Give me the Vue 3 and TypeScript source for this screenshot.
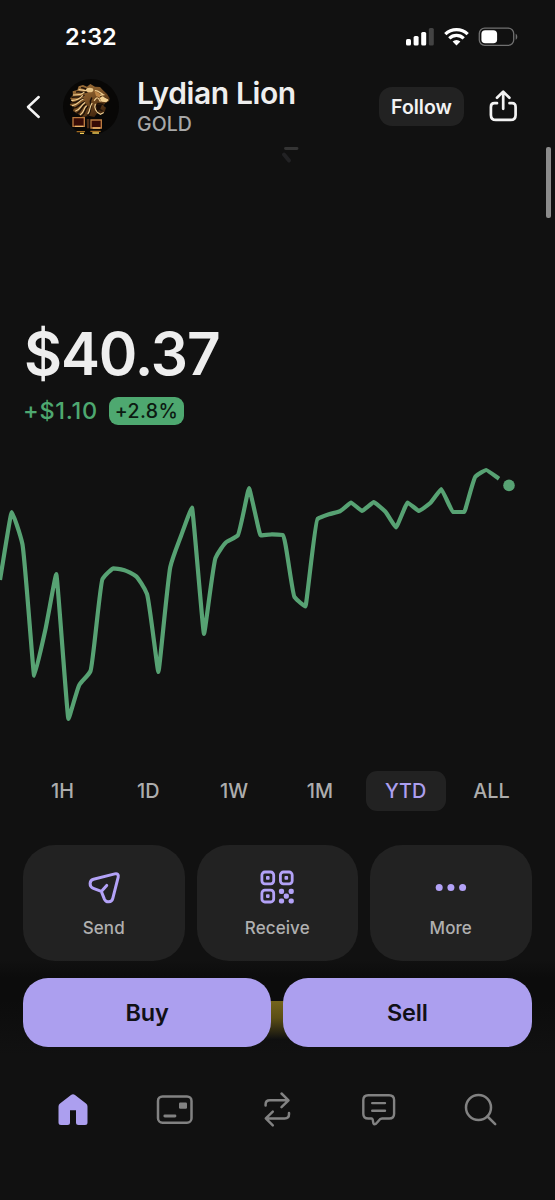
<script setup lang="ts">
type Point = [number, number]

const points: Point[] = [
  [0, 130], [11.7, 62], [22.4, 94], [34.2, 226], [45.3, 180], [56.3, 124], [68.4, 269],
  [79.3, 235], [90.5, 221], [102.5, 129], [113.3, 118.4], [124.5, 120.3], [135.7, 126], [147, 144],
  [158.4, 222], [170.3, 117], [181, 86], [192, 57.5], [204, 184], [215.5, 108], [226.4, 92],
  [237.7, 85.5], [249, 38], [260.5, 85.3], [272, 84.3], [283, 85], [294.5, 147], [305.5, 156.3],
  [317.5, 69], [329, 64.3], [340, 61.2], [351, 52.5], [362, 61], [373.7, 52.2], [385, 61.3],
  [396, 77.5], [407.5, 52.5], [419, 61], [430, 53.3], [441.3, 39], [452.8, 62], [464.3, 62],
  [475.5, 26.5], [486.2, 20], [499, 28.7],
]

function slopeAt(p: Point[], i: number): number {
  if (i === 0 || i === p.length - 1) {
    const a = i === 0 ? 0 : i - 1
    return (p[a + 1][1] - p[a][1]) / (p[a + 1][0] - p[a][0])
  }
  const before = (p[i][1] - p[i - 1][1]) / (p[i][0] - p[i - 1][0])
  const after = (p[i + 1][1] - p[i][1]) / (p[i + 1][0] - p[i][0])
  return before * after <= 0 ? 0 : (2 * before * after) / (before + after)
}

function smoothPath(p: Point[]): string {
  let d = `M${p[0][0]} ${p[0][1]}`
  for (let i = 1; i < p.length; i++) {
    const [x0, y0] = p[i - 1]
    const [x1, y1] = p[i]
    const s0 = slopeAt(p, i - 1)
    const s1 = slopeAt(p, i)
    // Turning points get short handles so the tips stay narrow.
    const h0 = (x1 - x0) * (s0 === 0 ? 0.08 : 0.2)
    const h1 = (x1 - x0) * (s1 === 0 ? 0.08 : 0.2)
    d += `C${x0 + h0} ${y0 + s0 * h0} ${x1 - h1} ${y1 - s1 * h1} ${x1} ${y1}`
  }
  return d
}

const line = smoothPath(points)
const ranges = ['1H', '1D', '1W', '1M', 'YTD', 'ALL']
const selected = 'YTD'
</script>

<template>
  <div class="screen">
    <div class="status">
      <span class="time">2:32</span>
      <svg class="indicators" width="114" height="24" viewBox="0 0 114 24">
        <g fill="#fff">
          <rect x="1" y="14" width="5" height="6.6" rx="1.5" />
          <rect x="8.6" y="11" width="5" height="9.6" rx="1.5" />
          <rect x="16.2" y="7" width="5" height="13.6" rx="1.5" />
          <rect x="23.8" y="3" width="5" height="17.6" rx="1.5" fill="#434343" />
        </g>
        <g fill="none" stroke="#fff" stroke-width="3.2">
          <path d="M40.3 9.2a15.9 15.9 0 0 1 22.4 0" />
          <path d="M44.3 13.4a10.2 10.2 0 0 1 14.4 0" />
        </g>
        <path d="M47.6 16.6a5.8 5.8 0 0 1 7.8 0L51.5 20.5z" fill="#fff" />
        <rect x="74.3" y="3.2" width="34.4" height="17.2" rx="5.4" fill="none" stroke="#707070" stroke-width="1.3" />
        <rect x="76.4" y="5.2" width="15.7" height="13.1" rx="3.8" fill="#fff" />
        <path d="M110.7 8.8c2 .7 2.2 5.3 0 6z" fill="#707070" />
      </svg>
    </div>

    <header class="header">
      <svg class="back" width="20" height="28" viewBox="0 0 20 28">
        <path d="M15.7 4L5 14l10.7 10" fill="none" stroke="#f3f3f3" stroke-width="2.5" stroke-linecap="round" stroke-linejoin="round" />
      </svg>
      <svg class="avatar" width="56" height="56" viewBox="24 25 168 168">
        <defs>
          <linearGradient id="gold" x1="0" y1="0" x2="0.7" y2="1">
            <stop offset="0" stop-color="#a97b42" />
            <stop offset="0.5" stop-color="#7d5326" />
            <stop offset="1" stop-color="#3d220c" />
          </linearGradient>
        </defs>
        <circle cx="108" cy="109" r="84" fill="#080706" />
        <path d="M96 48l10-8 14 8 15 1 9 10 12 11 8 13-2 9-11 5-6 8 8 6-4 12-10 7-12-3-9 12-18-4-16 5-16-11-14-8 4-12-14-6 8-12-7-8 9-9-1-12 14-4 4-11 13-4z" fill="url(#gold)" />
        <g fill="none" stroke="#1e1108" stroke-width="4.5" stroke-linecap="round">
          <path d="M51 80c16-4 26 4 36-6M47 97c18 2 25-8 37-13M54 113c16 0 20-15 34-19M64 129c17-6 12-20 28-28M79 137c16-10 8-20 19-29M65 64c13-3 21 7 34-2M80 51c11 0 16 11 29 4M97 137c10-8 8-20 11-28M110 82c-10 15 3 18-5 32" />
          <path d="M125 72l14 9 10 0M144 101l-15-2-8 12 8 14M133 116l8 4" />
        </g>
        <g fill="none" stroke="#efce92" stroke-width="3.5" stroke-linecap="round">
          <path d="M55 73c13-2 22 2 32-8M50 89c14 1 24-5 33-14M52 105c17-3 18-13 32-19M62 121c16-5 14-16 27-25M76 132c13-8 8-17 18-26M72 57c12 0 18 6 28 0M99 129c8-9 3-20 12-31" />
          <path d="M121 60c10 0 15 8 24 12l-12 2M118 89c6-8 10-13 17 2l22-4M121 101c-5 11 3 24 15 30l9-5" />
        </g>
        <ellipse cx="104" cy="58" rx="11" ry="7" fill="#e9c688" />
        <path d="M133 82l10-5 18 11-7 7-13-2z" fill="#f2d091" />
        <path d="M118 60l15 8 4 14-14-6z" fill="#bd8545" />
        <path d="M124 103l17-1-5 12-9 9z" fill="#170b06" />
        <path d="M54 141h34v26H54zM108 148h31v24h-31z" fill="#370b06" stroke="#b9793f" stroke-width="4" />
        <path d="M95 145h8v28h-7z" fill="#4b2c17" />
        <path d="M60 167h25M113 172h23" stroke="#f0b66b" stroke-width="4" />
        <path d="M65 183h25M106 182h31" stroke="#a56c20" stroke-width="4" />
        <path d="M75 188h12M112 187h20" stroke="#f1cd57" stroke-width="4" />
      </svg>
      <div class="names">
        <h1>Lydian Lion</h1>
        <span class="ticker">GOLD</span>
      </div>
      <button class="follow">Follow</button>
      <svg class="share" width="32" height="36" viewBox="0 0 32 36">
        <g fill="none" stroke="#f3f3f3" stroke-width="2.7" stroke-linecap="round" stroke-linejoin="round">
          <path d="M16.2 19.800V3.200M10 8.800l6.200-6.200 6.200 6.200" />
          <path d="M10 14.200H7.500c-2.500 0-3.600 1.300-3.600 3.700v8c0 3.600 1.700 5 5 5h14.700c3.300 0 5-1.400 5-5v-8c0-2.400-1.100-3.700-3.600-3.700h-2.500" />
        </g>
      </svg>
    </header>

    <main class="content">
      <svg class="loader" width="20" height="18" viewBox="0 0 20 18">
        <path d="M6.500 1.500H18" stroke="#343434" stroke-width="2.800" stroke-linecap="round" />
        <path d="M5 7.500l5 6" stroke="#222224" stroke-width="4" stroke-linecap="round" />
      </svg>
      <div class="scrollbar"></div>

      <div class="price">$40.37</div>
      <div class="change">
        <span class="delta">+$1.10</span>
        <span class="percent">+2.8%</span>
      </div>

      <svg class="chart" width="555" height="290" viewBox="0 0 555 290">
        <path :d="line" fill="none" stroke="#57a273" stroke-width="4.2" stroke-linejoin="round" />
        <circle cx="509" cy="35.4" r="5.8" fill="#57a273" />
      </svg>

      <div class="ranges">
        <button v-for="range in ranges" :key="range" :class="{ active: range === selected }">{{ range }}</button>
      </div>

      <div class="actions">
        <button class="action">
          <svg width="40" height="40" viewBox="0 0 40 40">
            <path d="M9.5 12.300L30.800 6.900c2.600-.7 4 .9 3.400 3.300l-5.400 21.200c-1.100 4.300-6.600 4.600-8.400.7l-3.100-7.700-7.900-3c-4.500-1.800-4.300-7.900.1-9.100zM17.300 24.400l5.400-6" fill="none" stroke="#b3a2f7" stroke-width="3" stroke-linecap="round" stroke-linejoin="round" />
          </svg>
          <span>Send</span>
        </button>
        <button class="action">
          <svg width="40" height="40" viewBox="0 0 40 40">
            <g fill="none" stroke="#b3a2f7" stroke-width="2.8">
              <rect x="4.9" y="5" width="11.8" height="11.8" rx="3" />
              <rect x="23.4" y="5" width="11.8" height="11.8" rx="3" />
              <rect x="4.9" y="23.2" width="11.8" height="11.8" rx="3" />
            </g>
            <g fill="#b3a2f7">
              <rect x="9" y="9.1" width="3.6" height="3.6" rx=".8" />
              <rect x="27.5" y="9.1" width="3.6" height="3.6" rx=".8" />
              <rect x="9" y="27.3" width="3.6" height="3.6" rx=".8" />
              <rect x="21.900" y="21.800" width="5.200" height="5.200" rx="2" />
              <rect x="31.600" y="21.800" width="5.200" height="5.200" rx="2" />
              <rect x="26.700" y="26.600" width="5.200" height="5.200" rx="2" />
              <rect x="21.900" y="31.400" width="5.200" height="5.200" rx="2" />
              <rect x="31.600" y="31.400" width="5.200" height="5.200" rx="2" />
            </g>
          </svg>
          <span>Receive</span>
        </button>
        <button class="action">
          <svg width="40" height="40" viewBox="0 0 40 40">
            <g fill="#b3a2f7">
              <circle cx="8.200" cy="20.500" r="3.500" />
              <circle cx="19.900" cy="20.500" r="3.500" />
              <circle cx="31.600" cy="20.500" r="3.500" />
            </g>
          </svg>
          <span>More</span>
        </button>
      </div>
    </main>

    <footer class="footer">
      <div class="peek"></div>
      <div class="trade">
        <button>Buy</button>
        <button>Sell</button>
      </div>
      <nav class="tabs">
        <svg width="44" height="44" viewBox="0 0 44 44">
          <path d="M20 8q2-1.700 4 0l11 8.600q1.500 1.200 1.500 3v15.900q0 2.500-2.500 2.500h-6.500q-2.500 0-2.500-2.500V23.200h-6v12.300q0 2.500-2.500 2.500H10q-2.500 0-2.500-2.500V19.600q0-1.800 1.500-3z" fill="#ac9fef" />
        </svg>
        <svg width="44" height="44" viewBox="0 0 44 44">
          <rect x="5" y="9.400" width="33.500" height="26.400" rx="4.500" fill="none" stroke="#828282" stroke-width="2.500" />
          <rect x="26" y="15.400" width="8" height="6.400" rx="1.200" fill="#828282" />
          <path d="M11.800 29H22" stroke="#828282" stroke-width="2.800" stroke-linecap="round" />
        </svg>
        <svg width="44" height="44" viewBox="0 0 44 44">
          <g fill="none" stroke="#828282" stroke-width="2.500" stroke-linecap="round" stroke-linejoin="round">
            <path d="M10.600 18.500v-1c0-2.500 1.700-4.200 4.300-4.200H33M26.500 6.500l7 6.800-7 6.900" />
            <path d="M34 26v1.200c0 2.500-1.700 4.200-4.300 4.200H11.300M17.800 24.700l-7 6.700 7 7" />
          </g>
        </svg>
        <svg width="44" height="44" viewBox="0 0 44 44">
          <g fill="none" stroke="#828282" stroke-width="2.400" stroke-linecap="round" stroke-linejoin="round">
            <path d="M11.200 8.300h21c3.200 0 4.900 1.600 4.900 4.800v13.600c0 3.200-1.700 4.800-4.900 4.800H25c-3.600 0-4.300 5.700-7.600 5.700-2.100 0-.5-5.700-3-5.700h-3.200c-3.200 0-4.900-1.600-4.900-4.800V13.100c0-3.200 1.700-4.800 4.900-4.800z" />
            <path d="M15.200 16.100h12.800M15.200 23.800h12.800" />
          </g>
        </svg>
        <svg width="44" height="44" viewBox="0 0 44 44">
          <g fill="none" stroke="#828282" stroke-width="2.500" stroke-linecap="round">
            <circle cx="19.500" cy="20.500" r="12.500" />
            <path d="M28.500 29.500l7.700 7.600" />
          </g>
        </svg>
      </nav>
    </footer>
  </div>
</template>

<style>
body {
  margin: 0;
  background: #111;
}
</style>

<style scoped>
.screen {
  width: 555px;
  height: 1200px;
  display: flex;
  flex-direction: column;
  overflow: hidden;
  background: #111;
  color: #eee;
  font-family: Inter, "Liberation Sans", sans-serif;
}

button {
  margin: 0;
  padding: 0;
  border: 0;
  background: none;
  color: inherit;
  font-family: inherit;
}

.status {
  height: 74px;
  box-sizing: border-box;
  padding: 25px 36.500px 0 65px;
  display: flex;
  justify-content: space-between;
}

.time {
  font-size: 23.500px;
  line-height: 24px;
  font-weight: 600;
  color: #fff;
}

.header {
  height: 73px;
  box-sizing: border-box;
  padding: 0 36px 8px 23px;
  display: flex;
  align-items: center;
  flex-shrink: 0;
}

.avatar {
  margin-left: 20px;
}

.names {
  flex: 1;
  margin-left: 18px;
  white-space: nowrap;
}

h1 {
  margin: -2px 0 0;
  font-size: 30px;
  line-height: 36px;
  font-weight: 600;
  letter-spacing: -0.400px;
}

.ticker {
  display: block;
  font-size: 19.500px;
  line-height: 26px;
  font-weight: 500;
  letter-spacing: 0.100px;
  color: #a8a8a8;
}

.follow {
  width: 85px;
  height: 39px;
  border-radius: 13px;
  background: #222;
  color: #f3f3f3;
  font-size: 19.500px;
  font-weight: 600;
}

.share {
  margin-left: 23px;
}

.content {
  position: relative;
  height: 831px;
  flex-shrink: 0;
}

.loader {
  position: absolute;
  left: 279px;
  top: 0;
}

.scrollbar {
  position: absolute;
  left: 546px;
  top: 0;
  width: 4.500px;
  height: 71px;
  border-radius: 2px;
  background: #8c8c8c;
}

.price {
  padding: 172px 0 0 24px;
  font-size: 58.500px;
  line-height: 70px;
  font-weight: 600;
  letter-spacing: -1.100px;
}

.change {
  height: 28px;
  margin-top: 8px;
  padding-left: 23px;
  display: flex;
  align-items: center;
  gap: 11px;
}

.delta {
  width: 75px;
  font-size: 23.500px;
  line-height: 28px;
  font-weight: 500;
  letter-spacing: 0.700px;
  white-space: nowrap;
  color: #4ea870;
}

.percent {
  width: 75px;
  height: 28px;
  border-radius: 9px;
  background: #4ea870;
  color: #0c1b12;
  font-size: 19.500px;
  line-height: 28px;
  font-weight: 500;
  letter-spacing: 0.400px;
  text-align: center;
}

.chart {
  display: block;
  margin-top: 25px;
}

.ranges {
  margin-top: 31px;
  padding: 0 23px;
  display: grid;
  grid-template-columns: repeat(6, 80px);
  justify-content: space-between;
}

.ranges button {
  height: 40px;
  padding-right: 1px;
  border-radius: 11px;
  font-size: 19.800px;
  font-weight: 500;
  color: #adadad;
}

.ranges .active {
  background: #222;
  color: #ac9fef;
}

.actions {
  margin-top: 34px;
  padding: 0 23.500px 0 23px;
  display: grid;
  grid-template-columns: repeat(3, 1fr);
  gap: 12px;
}

.action {
  height: 116px;
  box-sizing: border-box;
  padding-top: 22px;
  border-radius: 32px;
  background: #222;
  display: flex;
  flex-direction: column;
  align-items: center;
  color: #b0b0b0;
  font-size: 17px;
  line-height: 22px;
  font-weight: 500;
  letter-spacing: 0.100px;
}

.action span {
  margin-top: 10px;
}

.footer {
  position: relative;
  height: 240px;
  margin-top: -18px;
  box-sizing: border-box;
  padding-top: 18px;
  background: linear-gradient(to bottom, transparent 0, #0c0c0c 18px, #0c0c0c 40px, #111 95px);
}

.peek {
  position: absolute;
  left: 255px;
  top: 41px;
  width: 45px;
  height: 38px;
  background: linear-gradient(to bottom, #74641c, #5b4e15 45%, #111);
}

.trade {
  position: relative;
  padding: 0 23.500px 0 23px;
  display: grid;
  grid-template-columns: 1fr 1fr;
  gap: 12px;
}

.trade button {
  height: 68.500px;
  border-radius: 25px;
  background: #ac9fef;
  color: #111116;
  font-size: 23.500px;
  font-weight: 600;
  letter-spacing: -0.200px;
}

.tabs {
  margin-top: 40px;
  padding: 0 23.500px 0 22.500px;
  display: grid;
  grid-template-columns: repeat(5, 1fr);
  justify-items: center;
}
</style>
